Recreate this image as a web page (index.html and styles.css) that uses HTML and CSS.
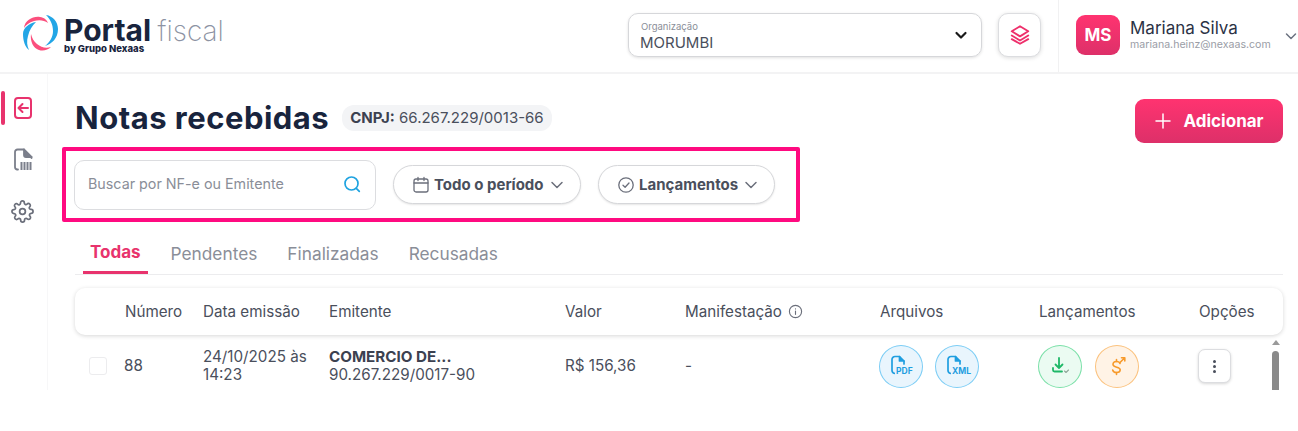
FILE: index.html

```html
<!DOCTYPE html>
<html lang="pt-BR">
<head>
  <meta charset="UTF-8">
  <title>Portal fiscal | Notas recebidas</title>
  <link rel="stylesheet" href="styles.css">
</head>
<body>

<header class="topbar">
  <div class="logo">
    <svg class="logo-mark" width="37" height="39" viewBox="0 0 37 39">
      <path d="M2 14C3 6 11 2 18 3C22 3.500 25 6 26 9C22 6 17 5.500 12 7C7 8.500 4 11 2 14Z" fill="#fb4f7d"/>
      <path d="M24 1C31 2 36 8 36 15C36 24 30 30 23 32C28 28 31 23 31 17C31 10 28 5 24 1Z" fill="#23a6e6"/>
      <path d="M14 8C7 9 1 14 1 20C1 27 3 33 7 36C5 32 4.500 27 6 22C7.500 16 10 12 14 8Z" fill="#23a6e6"/>
      <path d="M9 20C8 27 11 34 17 36C21 37.500 26 36 29 33C24 34.500 19 33.500 15 30C11.500 27 10 24 9 20Z" fill="#fb4f7d"/>
    </svg>
    <div class="logo-text">
      <div class="logo-name"><b>Portal</b> <span>fiscal</span></div>
      <div class="logo-by">by Grupo Nexaas</div>
    </div>
  </div>

  <div class="org-select">
    <div class="org-text">
      <div class="org-label">Organização</div>
      <div class="org-value">MORUMBI</div>
    </div>
    <svg width="14" height="14" viewBox="0 0 14 14" fill="none" stroke="#1a1a1a" stroke-width="2.2" stroke-linecap="round" stroke-linejoin="round"><path d="M2.5 5l4.500 4.500L11.500 5"/></svg>
  </div>

  <button class="layers-btn">
    <svg width="22" height="22" viewBox="0 0 24 24" fill="none" stroke="#ee2f6b" stroke-width="2" stroke-linejoin="round" stroke-linecap="round">
      <path d="M12 2.500l9 5.500-9 5.500-9-5.500z"/>
      <path d="M3 12.500l9 5.500 9-5.500"/>
      <path d="M3 16.500l9 5 9-5"/>
    </svg>
  </button>

  <div class="user">
    <div class="avatar">MS</div>
    <div class="user-info">
      <div class="user-name">Mariana Silva</div>
      <div class="user-mail">mariana.heinz@nexaas.com</div>
    </div>
    <svg class="user-caret" width="12" height="12" viewBox="0 0 12 12" fill="none" stroke="#6b7280" stroke-width="1.5" stroke-linecap="round" stroke-linejoin="round"><path d="M1.500 4l4.500 4.500L10.500 4"/></svg>
  </div>
</header>

<div class="layout">
  <nav class="sidebar">
    <a class="side-item active">
      <svg width="20" height="24" viewBox="0 0 20 24" fill="none" stroke="#e8336d" stroke-width="2" stroke-linecap="round" stroke-linejoin="round">
        <rect x="2" y="2" width="16" height="20" rx="3"/>
        <path d="M15 12H5.500M9.500 8l-4 4 4 4"/>
      </svg>
    </a>
    <a class="side-item">
      <svg class="doc-icon" width="20" height="23" viewBox="0 0 20 23" fill="none" stroke="#7b7f8b" stroke-width="1.8" stroke-linecap="round" stroke-linejoin="round">
        <path d="M5 21.500H4a2.500 2.500 0 0 1-2-2.500V4a2.500 2.500 0 0 1 2.500-2.500H11L18.500 9v1"/>
        <path d="M11 1.500V7a2 2 0 0 0 2 2h5.500" fill="#7b7f8b"/>
        <path d="M8.500 14v8M11.500 14v8M14.500 14v8M17.500 14v8" stroke-width="2" stroke-linecap="butt"/>
      </svg>
    </a>
    <a class="side-item">
      <svg width="23" height="23" viewBox="0 0 24 24" fill="none" stroke="#6b6f7b" stroke-width="1.8" stroke-linecap="round" stroke-linejoin="round">
        <circle cx="12" cy="12" r="3"/>
        <path d="M19.400 15a1.650 1.650 0 0 0 .33 1.820l.06.06a2 2 0 1 1-2.830 2.830l-.06-.06a1.650 1.650 0 0 0-2.800 1.170V21a2 2 0 1 1-4 0v-.09a1.650 1.650 0 0 0-2.800-1.170l-.06.06a2 2 0 1 1-2.830-2.830l.06-.06a1.650 1.650 0 0 0-1.170-2.800H3a2 2 0 1 1 0-4h.09a1.650 1.650 0 0 0 1.170-2.800l-.06-.06a2 2 0 1 1 2.830-2.830l.06.06a1.650 1.650 0 0 0 2.800-1.170V3a2 2 0 1 1 4 0v.09a1.650 1.650 0 0 0 2.800 1.170l.06-.06a2 2 0 1 1 2.830 2.830l-.06.06a1.650 1.650 0 0 0 1.170 2.800H21a2 2 0 1 1 0 4h-.09a1.650 1.650 0 0 0-1.510 1z"/>
      </svg>
    </a>
  </nav>

  <main class="content">
    <div class="title-row">
      <h1>Notas recebidas</h1>
      <span class="cnpj"><b>CNPJ:</b> 66.267.229/0013-66</span>
      <button class="add-btn">
        <svg width="18" height="18" viewBox="0 0 18 18" fill="none" stroke="#fff" stroke-width="1.5" stroke-linecap="round"><path d="M9 2v14M2 9h14"/></svg>
        Adicionar
      </button>
    </div>

    <div class="filter-bar">
      <div class="search">
        <span>Buscar por NF-e ou Emitente</span>
        <svg width="20" height="20" viewBox="0 0 20 20" fill="none" stroke="#1fa3e0" stroke-width="1.7" stroke-linecap="round"><circle cx="9.500" cy="9.500" r="6.500"/><path d="M14.300 14.300l3 3"/></svg>
      </div>
      <button class="pill pill-period">
        <svg width="18" height="18" viewBox="0 0 18 18" fill="none" stroke="#6b6f7b" stroke-width="1.3" stroke-linecap="round"><rect x="2" y="3" width="14" height="13" rx="2"/><path d="M2 7h14M6 1.500v3M12 1.500v3"/></svg>
        Todo o período
        <svg class="caret" width="14" height="14" viewBox="0 0 14 14" fill="none" stroke="#6b6f7b" stroke-width="1.5" stroke-linecap="round" stroke-linejoin="round"><path d="M2 4.500l5 5 5-5"/></svg>
      </button>
      <button class="pill pill-launch">
        <svg width="18" height="18" viewBox="0 0 18 18" fill="none" stroke="#6b6f7b" stroke-width="1.3" stroke-linecap="round" stroke-linejoin="round"><circle cx="9" cy="9" r="7.200"/><path d="M6 9.300l2.100 2L12 7"/></svg>
        Lançamentos
        <svg class="caret" width="14" height="14" viewBox="0 0 14 14" fill="none" stroke="#6b6f7b" stroke-width="1.5" stroke-linecap="round" stroke-linejoin="round"><path d="M2 4.500l5 5 5-5"/></svg>
      </button>
    </div>

    <div class="tabs">
      <a class="tab active">Todas</a>
      <a class="tab">Pendentes</a>
      <a class="tab">Finalizadas</a>
      <a class="tab">Recusadas</a>
    </div>

    <div class="table">
      <div class="table-head grid-row">
        <div></div>
        <div>Número</div>
        <div>Data emissão</div>
        <div>Emitente</div>
        <div>Valor</div>
        <div class="with-icon">Manifestação
          <svg width="15" height="15" viewBox="0 0 16 16" fill="none" stroke="#6b6f7b" stroke-width="1.2" stroke-linecap="round"><circle cx="8" cy="8" r="6.500"/><path d="M8 7.500v3.500M8 5v.2"/></svg>
        </div>
        <div>Arquivos</div>
        <div>Lançamentos</div>
        <div>Opções</div>
      </div>

      <div class="table-body">
        <div class="grid-row table-line">
          <div><span class="check"></span></div>
          <div class="number">88</div>
          <div class="date">24/10/2025 às<br>14:23</div>
          <div class="emitter"><b>COMERCIO DE...</b><br>90.267.229/0017-90</div>
          <div>R$ 156,36</div>
          <div>-</div>
          <div class="actions files">
            <span class="round blue">
              <svg width="24" height="24" viewBox="0 0 24 24" fill="none" stroke="#1f9ee0" stroke-width="1.7" stroke-linecap="round" stroke-linejoin="round"><path d="M7 19.500H6a3 3 0 0 1-3-3V5.500a3 3 0 0 1 3-3h4.500L15 7v3"/><path d="M10.500 2.500V7H15" fill="#1f9ee0"/></svg>
              <em>PDF</em>
            </span>
            <span class="round blue">
              <svg width="24" height="24" viewBox="0 0 24 24" fill="none" stroke="#1f9ee0" stroke-width="1.7" stroke-linecap="round" stroke-linejoin="round"><path d="M7 19.500H6a3 3 0 0 1-3-3V5.500a3 3 0 0 1 3-3h4.500L15 7v3"/><path d="M10.500 2.500V7H15" fill="#1f9ee0"/></svg>
              <em>XML</em>
            </span>
          </div>
          <div class="actions launches">
            <span class="round green">
              <svg width="22" height="22" viewBox="0 0 22 22" fill="none" stroke="#1fb868" stroke-width="1.8" stroke-linecap="round" stroke-linejoin="round"><path d="M10 3v10M6.500 9.500L10 13l3.500-3.500"/><path d="M4 13v2a1.500 1.500 0 0 0 1.500 1.500H13"/><path d="M15.500 16l1.500 1.500 2.500-2.500" stroke="#8fa79a" stroke-width="1.1"/></svg>
            </span>
            <span class="round orange">
              <svg width="24" height="24" viewBox="0 0 24 24" fill="none" stroke="#f79a2b" stroke-width="1.6" stroke-linecap="round" stroke-linejoin="round"><path d="M15 9.500C14.500 8 13 7.500 11.500 7.500 9.500 7.500 8 8.500 8 10.500c0 3.500 7.200 2 7.200 5.300 0 1.700-1.700 2.700-3.700 2.700-2 0-3.500-1-3.800-2.500"/><path d="M11.500 5.500v2M11.500 18.500v2"/><path d="M15 8.500L19.500 4M16.500 3.800h3.300V7"/></svg>
            </span>
          </div>
          <div>
            <button class="dots"><i></i><i></i><i></i></button>
          </div>
        </div>
      </div>

      <div class="scrollbar">
        <span class="scroll-up"></span>
        <span class="scroll-thumb"></span>
      </div>
    </div>
  </main>
</div>

</body>
</html>
```

FILE: styles.css

```css
* {
  box-sizing: border-box;
}
html, body {
  margin: 0;
  height: 431px;
  overflow: hidden;
}
body {
  font-family: "Inter", "Liberation Sans", sans-serif;
  background-color: #fff;
  color: #4a4f5c;
  font-size: 14px;
}
button {
  font-family: inherit;
  cursor: pointer;
}

/* top bar */
.topbar {
  display: flex;
  align-items: center;
  height: 74px;
  padding: 0 0 2px 22px;
  border-bottom: 2px solid #f3f3f4;
}
.logo {
  display: flex;
  align-items: center;
  gap: 5px;
  width: 606px;
  margin-top: -1px;
}
.logo-mark {
  flex: none;
  margin-top: -2px;
}
.logo-name {
  font-size: 30px;
  line-height: 26px;
  color: #18243d;
  white-space: nowrap;
  word-spacing: -2px;
}
.logo-name b {
  font-weight: 700;
}
.logo-name span {
  font-size: 28px;
  font-weight: 200;
  color: #8d93a3;
}
.logo-by {
  font-size: 9.5px;
  font-weight: 800;
  line-height: 9px;
  color: #18243d;
}
.org-select {
  display: flex;
  align-items: center;
  justify-content: space-between;
  width: 354px;
  height: 44px;
  padding: 0 13px 0 11px;
  border: 1px solid #d6d7da;
  border-radius: 10px;
  box-shadow: 0 1px 3px rgba(0,0,0,0.12);
}
.org-text {
  padding-top: 3px;
}
.org-label {
  font-size: 9.5px;
  line-height: 12px;
  color: #8a8e98;
  margin-left: 1px;
}
.org-value {
  font-size: 15px;
  line-height: 20px;
  color: #4a4f5c;
}
.layers-btn {
  display: flex;
  align-items: center;
  justify-content: center;
  width: 43px;
  height: 44px;
  margin-left: 16px;
  padding: 0;
  background: #fff;
  border: 1px solid #dcdde0;
  border-radius: 10px;
  box-shadow: 0 1px 4px rgba(0,0,0,0.14);
}
.user {
  display: flex;
  align-items: center;
  height: 72px;
  margin: 0 0 -2px 17px;
  padding-left: 17px;
  border-left: 1px solid #f1f1f2;
  flex: 1;
}
.avatar {
  display: flex;
  align-items: center;
  justify-content: center;
  width: 44px;
  height: 40px;
  margin-top: -2px;
  border-radius: 9px;
  background: linear-gradient(180deg, #ff3370, #dd3069);
  color: #fff;
  font-size: 17px;
  font-weight: 700;
}
.user-info {
  margin-left: 10px;
  margin-top: -2px;
}
.user-name {
  font-size: 17px;
  line-height: 20px;
  color: #2b3245;
}
.user-mail {
  font-size: 10.6px;
  line-height: 14px;
  color: #9a9da6;
}
.user-caret {
  flex: none;
  margin-left: 14px;
}

/* page */
.layout {
  display: flex;
}
.sidebar {
  display: flex;
  flex-direction: column;
  width: 48px;
  height: 316px;
  padding-top: 17px;
  flex: none;
  border-right: 1px solid #f7f7f8;
}
.side-item {
  display: flex;
  align-items: center;
  justify-content: center;
  height: 34px;
  margin-bottom: 18px;
  padding-right: 2px;
  position: relative;
}
.side-item:nth-child(2) {
  margin-bottom: 17px;
}
.doc-icon {
  margin-top: -2px;
}
.side-item.active::before {
  content: "";
  position: absolute;
  left: 1px;
  top: 0;
  width: 4px;
  height: 34px;
  border-radius: 2px;
  background-color: #e8336d;
}
.content {
  flex: 1;
  padding: 0 15px 0 27px;
}
.title-row {
  display: flex;
  align-items: center;
  height: 73px;
  padding-top: 14px;
}
h1 {
  margin: 0;
  font-size: 31px;
  font-weight: 700;
  color: #18243d;
  letter-spacing: 0.5px;
}
.cnpj {
  margin-left: 13px;
  padding: 4px 8px;
  border-radius: 12px;
  background-color: #f3f4f6;
  font-size: 15px;
  line-height: 18px;
  color: #4a4f5c;
}
.cnpj b {
  color: #3c4150;
}
.add-btn {
  display: flex;
  align-items: center;
  justify-content: center;
  gap: 11px;
  width: 148px;
  height: 44px;
  margin-left: auto;
  margin-top: 7px;
  border: none;
  border-radius: 9px;
  background: linear-gradient(180deg, #ff3370, #dd3069);
  color: #fff;
  font-size: 17px;
  font-weight: 700;
}

/* filter box, the bright outline is in the source picture */
.filter-bar {
  display: flex;
  align-items: center;
  width: 738px;
  height: 75px;
  margin-left: -13px;
  padding-left: 8px;
  border: 4px solid #ff0a80;
  border-radius: 2px;
}
.search {
  display: flex;
  align-items: center;
  justify-content: space-between;
  width: 302px;
  height: 50px;
  padding: 0 13px 2px 13px;
  border: 1px solid #dcdde0;
  border-radius: 10px;
  font-size: 14.3px;
  color: #8a8e98;
}
.pill {
  display: flex;
  align-items: center;
  height: 39px;
  padding: 0 0 0 18px;
  background: #fff;
  border: 1px solid #d6d7da;
  border-radius: 20px;
  box-shadow: 0 1px 2px rgba(0,0,0,0.1);
  font-size: 15px;
  font-weight: 700;
  color: #4a4f5c;
  gap: 4px;
}
.pill-period {
  width: 188px;
  margin-left: 17px;
}
.pill-launch {
  width: 177px;
  margin-left: 17px;
}
.caret {
  margin-left: 2px;
}

/* tabs */
.tabs {
  display: flex;
  height: 53px;
  padding: 18px 0 0 8px;
  border-bottom: 1px solid #ececee;
}
.tab {
  height: 34px;
  padding: 0 7px;
  margin-right: 16px;
  font-size: 17.3px;
  line-height: 27px;
  color: #8a8e98;
}
.tab.active {
  font-size: 17px;
  line-height: 25px;
  color: #e8336d;
  font-weight: 700;
  border-bottom: 3px solid #e8336d;
}

/* table */
.table {
  position: relative;
  margin-top: 13px;
  font-size: 15.2px;
}
.grid-row {
  display: grid;
  grid-template-columns: 50px 78px 126px 236px 120px 195px 159px 160px 1fr;
  align-items: center;
}
.table-head {
  height: 47px;
  background: #fff;
  border-radius: 10px;
  box-shadow: 0 1px 4px rgba(0,0,0,0.16);
  position: relative;
  color: #4a4f5c;
}
.with-icon {
  display: flex;
  align-items: center;
  gap: 6px;
}
.table-body {
  height: 55px;
  overflow: hidden;
}
.table-line {
  height: 62px;
  line-height: 18px;
}
.number {
  margin-left: -1px;
}
.check {
  display: block;
  width: 18px;
  height: 18px;
  margin-left: 14px;
  border: 1px solid #ececee;
  border-radius: 3px;
}
.emitter b {
  color: #3c4150;
}
.actions {
  display: flex;
  margin-left: -1px;
}
.files {
  gap: 12px;
}
.launches {
  gap: 13px;
}
.round {
  display: flex;
  align-items: center;
  justify-content: center;
  width: 44px;
  height: 43px;
  border-radius: 50%;
  border: 1px solid;
  position: relative;
}
.round.blue {
  background-color: #e9f5fd;
  border-color: #7ccdf5;
}
.round.green {
  background-color: #ebfbf2;
  border-color: #7be0a8;
}
.round.orange {
  background-color: #fff3e6;
  border-color: #fbc27e;
}
.round em {
  position: absolute;
  left: 15px;
  top: 20px;
  padding: 0 1px;
  background-color: #e9f5fd;
  font-size: 8.5px;
  line-height: 10px;
  font-style: normal;
  font-weight: 700;
  color: #1f9ee0;
}
.dots {
  display: flex;
  flex-direction: column;
  align-items: center;
  justify-content: center;
  gap: 2px;
  width: 33px;
  height: 34px;
  margin-left: -1px;
  padding: 0;
  background: #fff;
  border: 1px solid #dcdde0;
  border-radius: 7px;
  box-shadow: 0 1px 3px rgba(0,0,0,0.16);
}
.dots i {
  width: 3px;
  height: 3px;
  border-radius: 50%;
  background-color: #4a4f5c;
}
.scrollbar {
  position: absolute;
  right: 3px;
  top: 52px;
  bottom: 0;
  width: 8px;
}
.scroll-up {
  display: block;
  width: 0;
  margin: 0 auto 6px;
  border-left: 4px solid transparent;
  border-right: 4px solid transparent;
  border-bottom: 5px solid #9a9a9a;
}
.scroll-thumb {
  display: block;
  width: 7px;
  height: 39px;
  border-radius: 4px 4px 0 0;
  background-color: #8a8a8a;
}
```
